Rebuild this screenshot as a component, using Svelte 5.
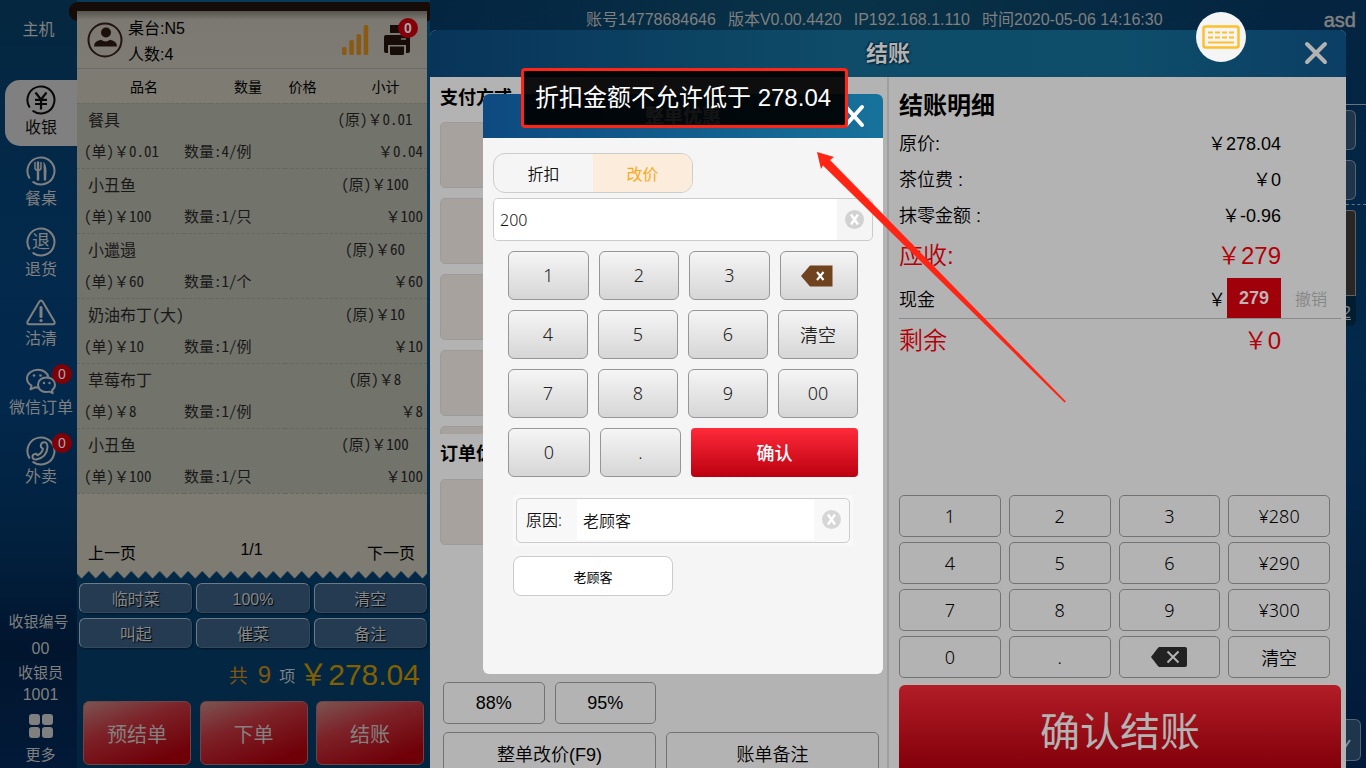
<script>
  const dishes = [
    { name: '餐具', price: '0.01', qty: '4/例', total: '0.04' },
    { name: '小丑鱼', price: '100', qty: '1/只', total: '100' },
    { name: '小邋遢', price: '60', qty: '1/个', total: '60' },
    { name: '奶油布丁(大)', price: '10', qty: '1/例', total: '10' },
    { name: '草莓布丁', price: '8', qty: '1/例', total: '8' },
    { name: '小丑鱼', price: '100', qty: '1/只', total: '100' }
  ];
  const nav = [
    { id: 'cash', label: '收银', active: true },
    { id: 'table', label: '餐桌' },
    { id: 'refund', label: '退货' },
    { id: 'soldout', label: '沽清', short: true },
    { id: 'wechat', label: '微信订单', short: true, badge: 0 },
    { id: 'takeout', label: '外卖', short: true, badge: 0 }
  ];
  const ops = ['临时菜', '100%', '清空', '叫起', '催菜', '备注'];
  const summary = [
    ['原价:', '￥278.04'],
    ['茶位费 :', '￥0'],
    ['抹零金额 :', '￥-0.96']
  ];
  const payKeys = ['1', '2', '3', '¥280', '4', '5', '6', '¥290', '7', '8', '9', '¥300', '0', '.', 'del', '清空'];
  const padRows = [
    { cls: 'r1', keys: ['1', '2', '3', 'del'] },
    { cls: 'r2', keys: ['4', '5', '6', '清空'] },
    { cls: 'r2', keys: ['7', '8', '9', '00'] },
    { cls: 'r4', keys: ['0', '.', '确认'] }
  ];
  const payCards = Array(15).fill(0);
  const offerCards = Array(3).fill(0);
  let amount = $state('200');
  let reason = $state('老顾客');
</script>

<div class="app">
  <nav class="side">
    <div class="host">主机</div>
    {#each nav as n}
      <button class="item" class:active={n.active} class:short={n.short}>
        <svg class="nicon" viewBox="0 0 30 30" fill="none" stroke="currentColor" stroke-width="2" aria-hidden="true">
          {#if n.id !== 'soldout' && n.id !== 'wechat'}
            <path d="M7.3 26.1A13.5 13.5 0 1 0 3.3 21.8" stroke-linecap="round" />
          {/if}
          {#if n.id === 'cash'}
            <path d="M9.5 7.5l5.5 7 5.500-7M15 14.500v10M9 14.800h12M9 19h12" stroke-width="2.200" />
          {:else if n.id === 'table'}
            <path d="M12 5.500v19" stroke-width="2.400" />
            <path d="M9 6v6q0 2 3 2.500q3-.5 3-2.500v-6" stroke-width="1.500" />
            <path d="M17.500 5.500q3 4 3 9.500l-.4 9.500h-2.300z" fill="currentColor" stroke="none" />
          {:else if n.id === 'refund'}
            <text class="ring" x="15" y="21" text-anchor="middle">退</text>
          {:else if n.id === 'soldout'}
            <path d="M13.400 3.500q1.600-2.200 3.200 0l11.800 20q1 2.500-1.600 2.800H3.200q-2.600-.3-1.600-2.800z" />
            <path d="M15 9.500v9" stroke-width="3" stroke-linecap="round" />
            <circle cx="15" cy="22.500" r="1.600" fill="currentColor" stroke="none" />
          {:else if n.id === 'wechat'}
            <path d="M13 20.500q-2 .3-4-.2l-4.500 2 1-3.600C2 16.500 1 14 1 11.600 1 6.500 6 2.800 12 2.800c5.500 0 9.500 3.200 10.300 7.200" stroke-linejoin="round" />
            <path d="M20.500 10.500c5 0 8.500 3.200 8.500 7.200 0 2.300-1.200 4.200-3 5.500l.7 3-3.300-1.600c-6.500 1.500-11.400-2-11.400-6.900 0-4 3.500-7.200 8.500-7.200z" stroke-linejoin="round" />
            <g fill="currentColor" stroke="none"><circle cx="8" cy="8.500" r="1.300" /><circle cx="14.500" cy="8.500" r="1.300" /><circle cx="18" cy="16" r="1.200" /><circle cx="23.500" cy="16" r="1.200" /></g>
          {:else}
            <path d="M16.500 6.500q5-1.500 5 4.500-.5 10-11 12.500-4 .5-4-3 0-2.500 3.500-2.800l1.500 1.500q4.500-2 5.500-6.500l-2-1.500q-.8-3.200 1.500-4.700z" stroke-linejoin="round" />
          {/if}
        </svg>
        <span>{n.label}</span>
        {#if n.badge !== undefined}<b class="badge">{n.badge}</b>{/if}
      </button>
    {/each}
    <div class="cashier">
      <div class="no">收银编号</div>
      <div class="num">00</div>
      <div>收银员</div>
      <div>1001</div>
      <button class="more">
        <svg viewBox="0 0 26 26" width="26" height="26" fill="#808080" aria-hidden="true">
          <rect x="1" y="1" width="11" height="11" rx="3" /><rect x="14" y="1" width="11" height="11" rx="3" />
          <rect x="1" y="14" width="11" height="11" rx="3" /><rect x="14" y="14" width="11" height="11" rx="3" />
        </svg>
        更多
      </button>
    </div>
  </nav>

  <section class="order">
    <div class="paper">
      <header class="seat">
        <svg width="36" height="36" viewBox="0 0 36 36" aria-hidden="true">
          <circle cx="18" cy="18" r="16.500" fill="none" stroke="#23140f" stroke-width="2" />
          <circle cx="19" cy="10.500" r="5" fill="#1d100b" />
          <path d="M7 24.500q0-5.500 7-6.800 5 3.500 9 0 7 1.300 7 6.800z" fill="#1d100b" />
        </svg>
        <div class="who"><div>桌台:N5</div><div>人数:4</div></div>
        <svg class="signal" width="28" height="32" viewBox="0 0 28 32" fill="#8a5a12" aria-hidden="true">
          <rect x="1" y="23" width="4.500" height="8" rx="1.500" /><rect x="8.300" y="16" width="4.500" height="15" rx="1.500" />
          <rect x="15.500" y="10" width="4.500" height="21" rx="1.500" /><rect x="22.700" y="1" width="4.500" height="30" rx="1.500" />
        </svg>
        <button class="print" aria-label="打印">
          <svg width="28" height="32" viewBox="0 0 28 32" fill="#170c08" aria-hidden="true">
            <path d="M7 1h14v8H7zM3 11h22q2 0 2 2v14q0 2-2 2h-2v-8H5v8H3q-2 0-2-2V13q0-2 2-2z" />
            <path d="M7 22.500h14v7q0 1.500-1.500 1.500h-11q-1.500 0-1.500-1.500z" /><path d="M18 15h5" stroke="#7a776e" stroke-width="1.500" />
          </svg>
          <b class="badge">0</b>
        </button>
      </header>
      <table>
        <colgroup><col class="c1" /><col class="c2" /><col class="c3" /><col class="c4" /><col /></colgroup>
        <thead><tr><th colspan="2">品名</th><th>数量</th><th>价格</th><th class="sub">小计</th></tr></thead>
        {#each dishes as d}
          <tbody>
            <tr class="a"><td colspan="3" class="name">{d.name}</td><td colspan="2" class="orig">(原)￥{d.price}</td></tr>
            <tr class="b"><td class="unit">(单)￥{d.price}</td><td colspan="2">数量:{d.qty}</td><td colspan="2" class="tot">￥{d.total}</td></tr>
          </tbody>
        {/each}
      </table>
      <div class="pager"><button>上一页</button><span>1/1</span><button>下一页</button></div>
    </div>
    <svg class="teeth" width="100%" height="8" aria-hidden="true">
      <defs><pattern id="tooth" x="-2.500" width="14.200" height="8" patternUnits="userSpaceOnUse"><path d="M0 0H14.200L7.100 7.500z" fill="#7d7b72" /></pattern></defs>
      <rect width="100%" height="8" fill="url(#tooth)" />
    </svg>
    <div class="ops">{#each ops as o}<button>{o}</button>{/each}</div>
    <div class="sum"><span class="gong">共</span><span class="nine">9</span><span class="xiang">项</span><strong>￥278.04</strong></div>
    <div class="acts"><button>预结单</button><button>下单</button><button>结账</button></div>
  </section>

  <main class="main">
    <header class="top">
      <span>账号14778684646</span><span>版本V0.00.4420</span><span>IP192.168.1.110</span><span>时间2020-05-06 14:16:30</span>
      <span class="user">asd</span>
    </header>
    <div class="stage">
      <section class="checkout">
        <header class="chead">
          <h1>结账</h1>
          <button class="close" aria-label="关闭结账">
            <svg width="24" height="24" viewBox="0 0 24 24" stroke="#b3b3b3" stroke-width="4" stroke-linecap="round" aria-hidden="true"><path d="M3 3l18 18M21 3L3 21" /></svg>
          </button>
        </header>
        <div class="cols">
          <div class="pay">
            <h2>支付方式</h2>
            <div class="cards five">{#each payCards as _}<div class="card"></div>{/each}</div>
            <h2 class="offer">订单优惠</h2>
            <div class="cards one">{#each offerCards as _}<div class="card"></div>{/each}</div>
            <div class="offers">
              <button>88%</button><button>95%</button>
              <button class="wide">整单改价(F9)</button><button class="wide">账单备注</button>
            </div>
          </div>
          <div class="detail">
            <h2>结账明细</h2>
            {#each summary as [k, v]}<div class="line"><span>{k}</span><span>{v}</span></div>{/each}
            <div class="line big"><span>应收:</span><span>￥279</span></div>
            <div class="cashline"><span class="k">现金</span><span class="yen">￥</span><b>279</b><button>撤销</button></div>
            <div class="line big"><span>剩余</span><span>￥0</span></div>
            <div class="keys">
              {#each payKeys as k}
                {#if k === 'del'}
                  <button aria-label="退格"><svg width="36" height="20" viewBox="0 0 36 20" aria-hidden="true"><path d="M8 0H34q2 0 2 2V18q0 2-2 2H8L6.500 18.500 0 10 6.500 1.500z" fill="#222" /><path d="M16.500 4.500l11 11M27.500 4.500l-11 11" stroke="#b3b3b3" stroke-width="2" /></svg></button>
                {:else}<button>{k}</button>{/if}
              {/each}
            </div>
            <button class="confirm">确认结账</button>
          </div>
        </div>
      </section>
      <aside class="peek">
        <div class="tab"></div><div class="tab"></div>
        <div class="dash"></div>
        <div class="dish"></div><div class="count">2</div>
        <div class="tab foot"><svg width="8" height="10" viewBox="0 0 8 10" fill="none" stroke="#808b93" stroke-width="2" aria-hidden="true"><path d="M-3 4l3 4L4 2" /></svg></div>
      </aside>
    </div>
  </main>

  <div class="layer">
    <section class="modal">
      <header>
        <h2>整单优惠</h2>
        <button class="close" aria-label="关闭">
          <svg width="22" height="24" viewBox="0 0 22 24" stroke="#fff" stroke-width="4" stroke-linecap="round" aria-hidden="true"><path d="M3 3l16 18M19 3L3 21" /></svg>
        </button>
      </header>
      <div class="tabs"><button>折扣</button><button class="on">改价</button></div>
      <div class="amount">
        <input bind:value={amount} aria-label="金额" />
        <button class="clear" aria-label="清除金额"><svg width="19" height="19" viewBox="0 0 19 19" aria-hidden="true"><circle cx="9.500" cy="9.500" r="9.500" fill="#d2d2d2" /><path d="M6 4.500l7 10M13 4.500l-7 10" stroke="#fff" stroke-width="2.400" /></svg></button>
      </div>
      <div class="pad">
        {#each padRows as row}
          <div class="prow {row.cls}">
            {#each row.keys as k}
              {#if k === 'del'}
                <button class="del" aria-label="删除"><svg width="32" height="22" viewBox="0 0 32 22" aria-hidden="true"><path d="M9 0.500H31.500v21H9L0 11z" fill="#70431f" /><path d="M16 7l6.500 8M22.500 7L16 15" stroke="#fff" stroke-width="2" /></svg></button>
              {:else}<button class:ok={k === '确认'}>{k}</button>{/if}
            {/each}
          </div>
        {/each}
      </div>
      <div class="reason">
        <div class="rbox">
          <label for="reason">原因:</label>
          <input id="reason" bind:value={reason} />
          <button class="clear" aria-label="清除原因"><svg width="19" height="19" viewBox="0 0 19 19" aria-hidden="true"><circle cx="9.500" cy="9.500" r="9.500" fill="#d6d6d6" /><path d="M6 4.500l7 10M13 4.500l-7 10" stroke="#fff" stroke-width="2.400" /></svg></button>
        </div>
      </div>
      <button class="preset">老顾客</button>
    </section>
  </div>

  <div class="toast" role="alert">折扣金额不允许低于 278.04</div>
  <svg class="arrow" width="252" height="254" viewBox="0 0 252 254" aria-hidden="true">
    <path d="M1 1L18 6L14 9L250 250.500L248.500 251.500L7 14.500L5 18z" fill="#ff2413" />
  </svg>
  <button class="float" aria-label="键盘">
    <svg width="38" height="24" viewBox="0 0 38 24" fill="none" stroke="#fdc02a" stroke-width="2.500" aria-hidden="true">
      <rect x="1.500" y="1.500" width="35" height="21" rx="2" />
      <path d="M6 7.500h5M13 7.500h5M20 7.500h5M27 7.500h5M6 12.500h5M13 12.500h5M20 12.500h5M27 12.500h5M6 17.500h26" stroke-width="2" />
    </svg>
  </button>
</div>

<style>
  :global(body) { margin: 0; overflow: hidden; }
  .app { position: relative; display: flex; height: 100vh; overflow: hidden; font-family: "Liberation Sans", "Noto Sans CJK SC", sans-serif; font-size: 16px; color: #808080;
    background: linear-gradient(100deg, transparent 30%, #0b3c4c99 62%, transparent 95%) 0 0 / 100% 30px no-repeat, linear-gradient(180deg, #042440 0, #02284a 45%, #02264a 60%, #03203e 75%, #02193a 100%); }
  .app * { box-sizing: border-box; }
  button { font: inherit; color: inherit; background: none; border: 0; padding: 0; margin: 0; cursor: pointer; white-space: nowrap; }
  h1, h2 { margin: 0; }

  .side { width: 77px; flex: none; display: flex; flex-direction: column; gap: 5px; background: linear-gradient(180deg, #05273f 0, #03294a 25%, #02294d 50%, #02213f 70%, #01152e 84%, #021a38 100%); }
  .host { height: 75px; padding-top: 18px; line-height: 24px; text-align: center; }
  .item { position: relative; height: 66px; display: flex; flex-direction: column; align-items: center; justify-content: space-between; padding: 5px 0 8px; line-height: 20px; margin-left: 5px; border-radius: 15px 0 0 15px; font-size: 16px; }
  .item.active { background: #808080; color: #080808; }
  .item.short { height: 64px; }
  .nicon { width: 30px; height: 30px; flex: none; }
  .ring { font-size: 18px; fill: currentColor; stroke: none; }
  .badge { position: absolute; right: 5px; top: 2px; width: 20px; height: 20px; border-radius: 50%; background: #800008; color: #a8a8a8; font-size: 14px; font-weight: 400; line-height: 20px; text-align: center; }
  .cashier { margin-top: auto; text-align: center; font-size: 15px; line-height: 22px; padding: 0 0 3px 4px; display: flex; flex-direction: column; }
  .cashier .no { line-height: 28px; margin-left: -4px; }
  .cashier .num { line-height: 26px; }
  .cashier div:nth-child(n + 2) { font-size: 16px; }
  .cashier div:nth-child(3) { font-size: 15px; }
  .more { display: flex; flex-direction: column; align-items: center; gap: 6px; line-height: 20px; padding-top: 7px; }

  .order { position: relative; width: 353px; flex: none; display: flex; flex-direction: column; padding-top: 11px; background: linear-gradient(180deg, #063a58 0, #032c4a 60%, #03243f 100%); }
  .order::before { content: ""; position: absolute; left: -8px; right: 0; top: 2px; height: 19px; border-radius: 9px 2px 2px 9px; background: #150b07; }
  .paper { position: relative; flex: 1; margin-right: 3px; display: flex; flex-direction: column; background: #7d7b72; color: #000; }
  .seat { height: 58px; display: flex; align-items: center; padding: 0 16px 0 10px; border-bottom: 1px solid #6c6b6c; background: linear-gradient(180deg, #56544e 0, #7b7971 9px, #7d7b74 100%); }
  .who { margin-left: 5px; font-size: 16px; line-height: 26px; padding-top: 4px; }
  .signal { margin-left: auto; }
  .print { position: relative; margin-left: 14px; height: 32px; }
  .print .badge { right: -7px; top: -6px; font-weight: 700; background: #86000a; }
  table { width: 100%; border-collapse: collapse; table-layout: fixed; }
  .c1 { width: 107px; } .c2 { width: 27px; } .c3 { width: 74px; } .c4 { width: 35px; }
  th { font-size: 14px; font-weight: 400; height: 34px; padding: 0; border-bottom: 1px dashed #6a6a62; white-space: nowrap; }
  th.sub { padding-left: 24px; }
  tbody { background: #72736b; border-bottom: 1px dashed #65665f; font-family: "Noto Sans Mono CJK SC", "Noto Sans CJK SC", sans-serif; font-size: 15px; color: #181818; }
  td { padding: 0; line-height: 20px; white-space: nowrap; }
  .a td { height: 32px; } .b td { height: 33px; }
  .name { padding-left: 11px; font-size: 16px; }
  .orig { text-align: center; padding-left: 38px; }
  .unit { padding-left: 7px; }
  .tot { text-align: right; padding-right: 4px; }
  .pager { margin-top: auto; display: flex; justify-content: space-between; align-items: center; padding: 0 12px 1px 11px; line-height: 24px; }
  .pager span { padding-bottom: 8px; }
  .teeth { display: block; position: relative; flex: none; width: calc(100% - 3px); }
  .ops { display: grid; grid-template-columns: repeat(3, 1fr); gap: 5px 4px; padding: 4px 3px 0 2px; }
  .ops button { height: 30px; border: 1px solid #6d7a84; border-right-color: #334a5c; border-bottom-color: #334a5c; border-radius: 6px; background: #243b52; color: #84898c; text-shadow: 1px 1px 1px #000; box-shadow: 1px 1px 2px #011526; font-size: 16px; line-height: 24px; padding-top: 3px; }
  .sum { display: flex; align-items: center; justify-content: flex-end; height: 53px; padding-right: 10px; color: #80560e; }
  .gong { font-size: 19px; } .nine { font-size: 24px; margin: 0 8px 0 10px; } .xiang { color: #7d8388; } .sum strong { font-size: 30px; font-weight: 400; color: #806000; line-height: 36px; margin-left: 3px; }
  .acts { display: flex; justify-content: space-between; padding: 0 6px 3px; }
  .acts button { width: 108px; height: 64px; border: 1px solid #6b4448; border-radius: 6px; background: linear-gradient(160deg, #7b5452 0, #7c2228 38%, #700008 85%); color: #858080; font-size: 20px; }

  .main { flex: 1; min-width: 0; display: flex; flex-direction: column; }
  .top { height: 30px; display: flex; align-items: center; gap: 12px; padding: 9px 10px 0 156px; line-height: 20px; white-space: nowrap; }
  .top .user { margin-left: auto; font-size: 20px; -webkit-text-stroke: 0.5px #808080; }
  .stage { flex: 1; min-height: 0; display: flex; }
  .checkout { flex: 1; min-width: 0; display: flex; flex-direction: column; background: #b3b3b3; border-radius: 6px 6px 0 0; overflow: hidden; color: #000; }
  .chead { position: relative; height: 47px; flex: none; display: flex; align-items: center; justify-content: center; background: linear-gradient(90deg, #083459 0, #0e4c69 45%, #0e4e6b 75%, #0b3e64 100%); }
  .chead h1 { font-size: 22px; line-height: 30px; color: #b3b3b3; text-shadow: 1px 1px 2px #001a2a, -1px -1px 1px #052a40; }
  .close { position: absolute; right: 18px; top: 12px; height: 24px; }
  .chead .close { top: 11px; }
  .cols { flex: 1; min-height: 0; display: grid; grid-template-columns: 459fr 457fr; }
  .pay { min-width: 0; overflow: hidden; padding: 7px 8px 0 10px; border-right: 2px solid #9f9f9f; }
  .pay h2 { font-size: 18px; line-height: 28px; }
  .cards { display: grid; grid-template-columns: repeat(3, 1fr); gap: 10px; overflow: hidden; margin-top: 10px; }
  .five { height: 312px; } .one { height: 67px; }
  .card { height: 66px; border: 1px solid #9b9b9b; border-radius: 5px; background: #a8a29f; }
  .pay h2.offer { margin-top: 6px; }
  .one { margin-top: 11px; }
  .offers { display: grid; grid-template-columns: repeat(4, 1fr); gap: 8px 10px; margin: 136px 0 0 3px; }
  .offers button, .keys button { height: 42px; border: 1px solid #737373; border-radius: 5px; font-size: 18px; }
  .offers button { font-weight: 350; }
  .offers .wide { grid-column: span 2; }
  .offers .wide:nth-child(3) { grid-column: 1 / 3; }
  .detail { min-width: 0; min-height: 0; display: flex; flex-direction: column; padding: 11px 5px 0 10px; }
  .detail h2 { font-size: 24px; line-height: 36px; margin-bottom: 2px; }
  .line { display: flex; justify-content: space-between; font-size: 18px; font-weight: 350; line-height: 36px; padding-right: 60px; }
  .line.big { font-size: 24px; line-height: 44px; color: #b40008; }
  .cashline { display: flex; align-items: center; height: 41px; border-bottom: 1px solid #8b8b8b; font-size: 18px; font-weight: 350; }
  .cashline .k { flex: 1; } .yen { margin-right: 1px; }
  .cashline b { background: #9f000a; color: #c0b3b4; height: 40px; line-height: 40px; padding: 0 12px; font-weight: 700; }
  .cashline button { width: 60px; font-size: 16px; color: #868686; }
  .keys { margin-top: auto; display: grid; grid-template-columns: repeat(4, 1fr); gap: 5px 8px; padding-right: 11px; font-family: "Noto Sans", "Noto Sans CJK SC", sans-serif; font-weight: 350; }
  .keys svg { display: block; margin: 0 auto; }
  .confirm { flex: none; margin-top: 7px; height: 83px; border-radius: 6px 6px 0 0; font-size: 40px; line-height: 60px; padding-top: 10px; color: #b3b3b3; background: linear-gradient(180deg, #b31d27, #82000a); }

  .peek { width: 20px; flex: none; display: flex; flex-direction: column; gap: 10px; margin-top: 74px; border-top: 1px solid #68747f; padding: 5px 0 7px 0; overflow: hidden; }
  .tab { width: 10px; height: 40px; flex: none; background: #1f354c; border: 1px solid #56646f; border-left: 0; border-radius: 0 6px 6px 0; }
  .dash { flex: none; margin: -6px 0 -5px; border-top: 1px dashed #68747f; }
  .dish { width: 10px; height: 86px; flex: none; background: #292626; border: 1px solid #606060; border-left: 0; border-radius: 0 4px 0 0; }
  .count { width: 10px; height: 30px; flex: none; margin-top: -10px; background: #031d30; border-radius: 0 0 6px 0; text-decoration: underline; display: flex; justify-content: flex-end; padding-right: 5px; line-height: 34px; overflow: hidden; }
  .foot { margin-top: auto; width: 15px; height: 42px; padding-top: 18px; }
  .foot svg { display: block; }

  .layer { position: absolute; inset: 0; display: flex; align-items: center; justify-content: center; }
  .modal { width: 400px; min-height: 580px; background: #f5f5f5; border-radius: 6px; color: #111; font-family: "Noto Sans", "Noto Sans CJK SC", sans-serif; font-weight: 350; }
  .modal header { position: relative; height: 44px; border-radius: 6px 6px 0 0; background: linear-gradient(90deg, #0d4a80, #12618f 60%, #17729b); color: #fff; text-align: center; }
  .modal header h2 { font-size: 19px; line-height: 44px; }
  .modal .close { top: 10px; }
  .tabs { display: flex; width: 200px; height: 40px; margin: 15px 0 0 10px; border: 1px solid #ccc; border-radius: 12px; overflow: hidden; }
  .tabs button { flex: 1; }
  .tabs .on { background: #fcecdb; color: #f9a91c; font-weight: 400; }
  .amount { display: flex; height: 43px; margin: 5px 10px 0; border: 1px solid #ccc; border-radius: 5px; overflow: hidden; }
  input { font: inherit; color: #111; background: #fff; border: 0; outline: 0; padding: 0 6px; min-width: 0; flex: 1; border-radius: 0; }
  .clear { width: 35px; display: flex; align-items: center; justify-content: center; }
  .pad { display: flex; flex-direction: column; gap: 10px; padding: 10px 25px 0; }
  .prow { display: grid; gap: 10px; grid-template-columns: repeat(4, 1fr); }
  .prow.r1 { grid-template-columns: 81fr 80fr 81fr 78fr; }
  .prow.r4 { grid-template-columns: 82fr 81fr 167fr; }
  .pad button { height: 49px; border: 1px solid #969696; border-radius: 6px; background: linear-gradient(180deg, #f5f5f5, #d6d6d6); font-size: 18px; color: #222; padding-bottom: 2px; }
  .pad svg { display: block; margin: 0 auto; }
  .pad .del { padding: 0 4px 0 0; }
  .pad .ok { border: 0; border-radius: 4px; background: linear-gradient(180deg, #ff2a3a, #bb0010); color: #fff; font-weight: 500; }
  .reason { margin: 18px 30px 0; padding: 3px; background: #f8f8f8; }
  .rbox { display: flex; align-items: stretch; height: 45px; border: 1px solid #ccc; border-radius: 5px; padding-bottom: 2px; }
  .rbox label { width: 60px; padding-left: 9px; line-height: 42px; }
  .preset { width: 160px; height: 40px; display: block; margin: 10px 30px 0; border: 1px solid #ccc; border-radius: 8px; background: #fff; color: #000; font-size: 13px; font-weight: 400; }
  .toast { position: absolute; top: 68px; left: 50%; margin-left: -162px; border: 3px solid #ff2413; border-radius: 4px; background: rgba(0, 0, 0, 0.92); color: #fff; font-size: 24px; line-height: 54px; padding: 0 14px 0 11px; white-space: nowrap; }
  .arrow { position: absolute; left: 816px; top: 151px; pointer-events: none; }
  .float { position: absolute; top: 12px; right: 120px; width: 50px; height: 50px; border-radius: 50%; background: #f5f5f5; display: flex; align-items: center; justify-content: center; }
</style>
